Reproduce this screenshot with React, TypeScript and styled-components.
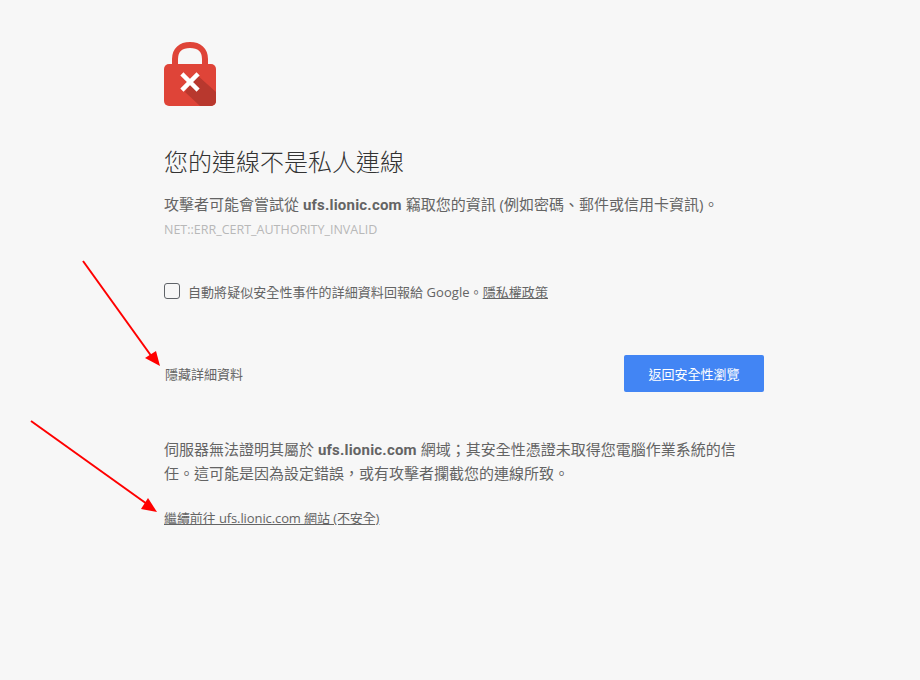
import React from "react";
import styled, { createGlobalStyle } from "styled-components";

const Global = createGlobalStyle`
  html, body { margin: 0; padding: 0; height: 100%; background: #f7f7f7; }
  #root { min-height: 680px; }
`;

const Page = styled.div`
  position: relative;
  width: 920px;
  height: 680px;
  overflow: hidden;
  background: #f7f7f7;
  color: #646464;
  font-family: "Open Sans", "Noto Sans CJK TC", sans-serif;
  font-size: 15px;
  line-height: 24px;
`;

const Column = styled.main`
  display: flex;
  flex-direction: column;
  width: 600px;
  margin-left: 164px;
  padding-top: 42px;
`;

const Lock = styled.svg`
  display: block;
  width: 52px;
  height: 64px;
`;

const Title = styled.h1`
  margin: 38px 0 0;
  font-size: 24px;
  line-height: 36px;
  font-weight: 300;
  color: #333;
`;

const Body = styled.p`
  margin: 12px 0 0;
  font-size: 15px;
  line-height: 24px;
  white-space: nowrap;
`;

const Domain = styled.b`
  font-family: Roboto, "Open Sans", sans-serif;
  font-weight: 700;
  letter-spacing: 0.2px;
  line-height: 0;
`;

const Code = styled.div`
  margin-top: 2px;
  font-size: 12.5px;
  line-height: 24px;
  color: #b8b8b8;
`;

const CheckRow = styled.label`
  display: flex;
  align-items: center;
  margin-top: 38px;
  font-size: 13px;
  line-height: 24px;
  letter-spacing: 0.06px;
`;

const Check = styled.span`
  box-sizing: border-box;
  width: 16px;
  height: 16px;
  margin-right: 8px;
  margin-top: -3px;
  border: 1px solid #5f6368;
  border-radius: 3px;
`;

const Underlined = styled.a`
  color: #646464;
  text-decoration: underline;
`;

const Actions = styled.div`
  display: flex;
  align-items: center;
  justify-content: space-between;
  margin-top: 51px;
`;

const Details = styled.span`
  margin-left: 1px;
  font-size: 13px;
`;

const Primary = styled.button`
  width: 140px;
  height: 37px;
  padding: 0;
  border: 0;
  border-radius: 2px;
  background: #4285f4;
  color: #fff;
  font: inherit;
  font-size: 13px;
`;

const Explain = styled.p`
  margin: 45px 0 0;
  width: 590px;
  font-size: 15px;
  line-height: 24px;
`;

const Proceed = styled(Underlined)`
  margin-top: 21px;
  font-size: 13px;
  line-height: 24px;
  letter-spacing: -0.1px;
`;

const Arrows = styled.svg`
  position: absolute;
  inset: 0;
  width: 920px;
  height: 680px;
  pointer-events: none;
`;

export default function App() {
  return (
    <Page lang="zh-Hant-TW">
      <Global />
      <Column>
        <Lock viewBox="0 0 52 64" aria-hidden="true">
          <path d="M11 26V17C11 8 17 3 26 3s15 5 15 14v9" fill="none" stroke="#df4438" strokeWidth="6" />
          <rect x="0" y="22" width="52" height="42" rx="5" fill="#df4438" />
          <path d="M21 50 33 33 52 50V59a5 5 0 0 1-5 5H36Z" fill="#b8382e" />
          <path d="M19.500 33.500 32.500 46.500M32.500 33.500 19.500 46.500" stroke="#fff" strokeWidth="4.500" strokeLinecap="square" />
        </Lock>
        <Title>您的連線不是私人連線</Title>
        <Body>
          攻擊者可能會嘗試從 <Domain>ufs.lionic.com</Domain> 竊取您的資訊 (例如密碼、郵件或信用卡資訊)。
        </Body>
        <Code>NET::ERR_CERT_AUTHORITY_INVALID</Code>
        <CheckRow>
          <Check />
          <span>
            自動將疑似安全性事件的詳細資料回報給 Google。<Underlined>隱私權政策</Underlined>
          </span>
        </CheckRow>
        <Actions>
          <Details>隱藏詳細資料</Details>
          <Primary>返回安全性瀏覽</Primary>
        </Actions>
        <Explain>
          伺服器無法證明其屬於 <Domain>ufs.lionic.com</Domain> 網域；其安全性憑證未取得您電腦作業系統的信任。這可能是因為設定錯誤，或有攻擊者攔截您的連線所致。
        </Explain>
        <Proceed>繼續前往 ufs.lionic.com 網站 (不安全)</Proceed>
      </Column>
      <Arrows viewBox="0 0 920 680" aria-hidden="true">
        <line x1="83" y1="261" x2="152" y2="357" stroke="#ff0000" strokeWidth="2" />
        <polygon points="160,366 145,358 156,351" fill="#ff0000" />
        <line x1="31" y1="421" x2="147" y2="504" stroke="#ff0000" strokeWidth="2" />
        <polygon points="157,512 141,509 148,498" fill="#ff0000" />
      </Arrows>
    </Page>
  );
}
